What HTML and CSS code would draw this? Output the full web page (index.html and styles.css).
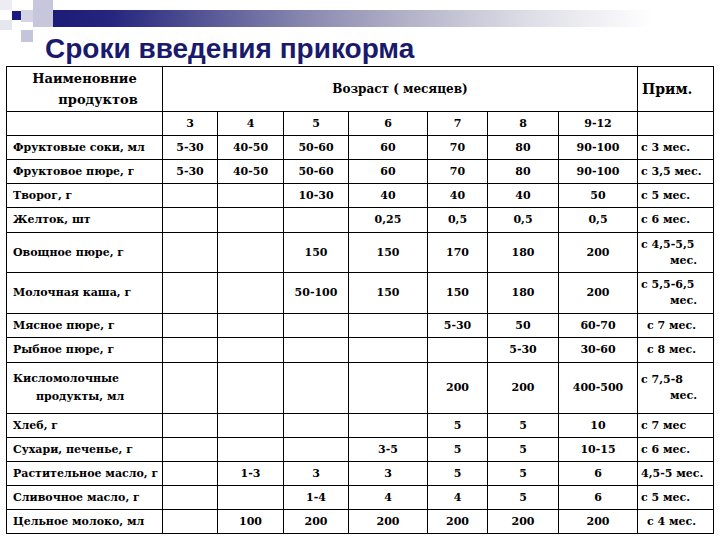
FILE: index.html
```html
<!DOCTYPE html>
<html lang="ru">
<head>
<meta charset="utf-8">
<title>Сроки введения прикорма</title>
<link rel="stylesheet" href="styles.css">
</head>
<body>
<div class="slide">
  <div class="deco">
    <span class="sq sq-a"></span>
    <span class="sq sq-b"></span>
    <span class="sq sq-c"></span>
    <span class="sq sq-d"></span>
    <span class="sq sq-e"></span>
    <span class="sq sq-navy"></span>
    <div class="bar"></div>
  </div>
  <h1 class="title">Сроки введения прикорма</h1>
  <table class="grid">
    <colgroup>
      <col class="c-name"><col class="c3"><col class="c4"><col class="c5"><col class="c6"><col class="c7"><col class="c8"><col class="c9"><col class="c-note">
    </colgroup>
    <tr class="h1">
      <td class="hname"><span class="hl1">Наименовние</span><span class="hl2">продуктов</span></td>
      <td class="hage" colspan="7">Возраст ( месяцев)</td>
      <td class="hnote">Прим.</td>
    </tr>
    <tr class="r24">
      <td></td><td class="v">3</td><td class="v">4</td><td class="v">5</td><td class="v">6</td><td class="v">7</td><td class="v">8</td><td class="v">9-12</td><td></td>
    </tr>
    <tr class="r24">
      <td class="n">Фруктовые соки, мл</td><td class="v">5-30</td><td class="v">40-50</td><td class="v">50-60</td><td class="v">60</td><td class="v">70</td><td class="v">80</td><td class="v">90-100</td><td class="p">с 3 мес.</td>
    </tr>
    <tr class="r24">
      <td class="n">Фруктовое пюре, г</td><td class="v">5-30</td><td class="v">40-50</td><td class="v">50-60</td><td class="v">60</td><td class="v">70</td><td class="v">80</td><td class="v">90-100</td><td class="p">с 3,5 мес.</td>
    </tr>
    <tr class="r24">
      <td class="n">Творог, г</td><td></td><td></td><td class="v">10-30</td><td class="v">40</td><td class="v">40</td><td class="v">40</td><td class="v">50</td><td class="p">с 5 мес.</td>
    </tr>
    <tr class="r25">
      <td class="n">Желток, шт</td><td></td><td></td><td></td><td class="v">0,25</td><td class="v">0,5</td><td class="v">0,5</td><td class="v">0,5</td><td class="p">с 6 мес.</td>
    </tr>
    <tr class="r40">
      <td class="n">Овощное пюре, г</td><td></td><td></td><td class="v">150</td><td class="v">150</td><td class="v">170</td><td class="v">180</td><td class="v">200</td><td class="p"><span class="pl1">с 4,5-5,5</span><span class="pl2">мес.</span></td>
    </tr>
    <tr class="r41">
      <td class="n">Молочная каша, г</td><td></td><td></td><td class="v">50-100</td><td class="v">150</td><td class="v">150</td><td class="v">180</td><td class="v">200</td><td class="p"><span class="pl1">с 5,5-6,5</span><span class="pl2">мес.</span></td>
    </tr>
    <tr class="r24">
      <td class="n">Мясное пюре, г</td><td></td><td></td><td></td><td></td><td class="v">5-30</td><td class="v">50</td><td class="v">60-70</td><td class="p ind">с 7 мес.</td>
    </tr>
    <tr class="r25">
      <td class="n">Рыбное пюре, г</td><td></td><td></td><td></td><td></td><td></td><td class="v">5-30</td><td class="v">30-60</td><td class="p ind">с 8 мес.</td>
    </tr>
    <tr class="r51">
      <td class="n"><span class="nl1">Кисломолочные</span><span class="nl2">продукты, мл</span></td><td></td><td></td><td></td><td></td><td class="v">200</td><td class="v">200</td><td class="v">400-500</td><td class="p"><span class="pl1">с 7,5-8</span><span class="pl2">мес.</span></td>
    </tr>
    <tr class="r24">
      <td class="n">Хлеб, г</td><td></td><td></td><td></td><td></td><td class="v">5</td><td class="v">5</td><td class="v">10</td><td class="p">с 7 мес</td>
    </tr>
    <tr class="r24">
      <td class="n">Сухари, печенье, г</td><td></td><td></td><td></td><td class="v">3-5</td><td class="v">5</td><td class="v">5</td><td class="v">10-15</td><td class="p">с 6 мес.</td>
    </tr>
    <tr class="r24">
      <td class="n">Растительное масло, г</td><td></td><td class="v">1-3</td><td class="v">3</td><td class="v">3</td><td class="v">5</td><td class="v">5</td><td class="v">6</td><td class="p">4,5-5 мес.</td>
    </tr>
    <tr class="r24">
      <td class="n">Сливочное масло, г</td><td></td><td></td><td class="v">1-4</td><td class="v">4</td><td class="v">4</td><td class="v">5</td><td class="v">6</td><td class="p">с 5 мес.</td>
    </tr>
    <tr class="r24">
      <td class="n">Цельное молоко, мл</td><td></td><td class="v">100</td><td class="v">200</td><td class="v">200</td><td class="v">200</td><td class="v">200</td><td class="v">200</td><td class="p ind">с 4 мес.</td>
    </tr>
  </table>
</div>
</body>
</html>
```

FILE: styles.css
```css
html, body {
  margin: 0;
  padding: 0;
  background: #fff;
}

.slide {
  width: 720px;
  height: 540px;
  overflow: hidden;
  color: #000;
}

.deco {
  position: relative;
  height: 27px;
}

.bar {
  margin-left: 53px;
  position: relative;
  top: 10px;
  height: 17px;
  background: linear-gradient(to right, #1c1c78 0px, #26267f 60px, #5a5a98 160px, #8c8cb2 260px, #b8b8cc 370px, #dcdce6 470px, #ffffff 600px);
}

.sq {
  position: absolute;
  display: block;
}
.sq-a { left: 0; top: 0; width: 12px; height: 10px; background: #ececf2; }
.sq-b { left: 33px; top: 0; width: 20px; height: 27px; background: #c6c6dc; }
.sq-c { left: 21px; top: 10px; width: 12px; height: 12px; background: #d4d4e4; }
.sq-d { left: 21px; top: 30px; width: 12px; height: 12px; background: #c4c4da; }
.sq-e { left: 0; top: 20px; width: 12px; height: 10px; background: #e6e6ee; }
.sq-navy { left: 12px; top: 11px; width: 9px; height: 9px; background: #1c1c80; }

.title {
  margin: 0 0 0 45px;
  padding: 7px 0 2px;
  font-family: "Liberation Sans", Arial, sans-serif;
  font-weight: bold;
  font-size: 28px;
  line-height: 30px;
  color: #1a1a6c;
}

.grid {
  margin-left: 6px;
  width: 707px;
  table-layout: fixed;
  border-collapse: collapse;
}

.c-name { width: 156px; }
.c3 { width: 55px; }
.c4 { width: 66px; }
.c5 { width: 65px; }
.c6 { width: 79px; }
.c7 { width: 60px; }
.c8 { width: 71px; }
.c9 { width: 79px; }
.c-note { width: 76px; }

.grid td {
  font-family: "DejaVu Serif", serif;
  font-weight: bold;
  font-size: 11px;
  line-height: 16px;
  color: #000;
  border: 1px solid #000;
  padding: 0;
  vertical-align: middle;
  white-space: nowrap;
  overflow: hidden;
}

.h1 td { height: 44px; }
.r24 td { height: 23px; }
.r25 td { height: 24px; }
.r40 td { height: 39px; }
.r41 td { height: 40px; }
.r51 td { height: 50px; }

.grid td.hname {
  text-align: center;
  font-size: 13px;
  line-height: 21px;
}
.hl1, .hl2 { display: block; }
.hl2 { padding-left: 27px; }

.grid td.hage {
  text-align: center;
  font-size: 12px;
}

.grid td.hnote {
  font-size: 14px;
  padding-left: 4px;
}

.grid td.v { text-align: center; }

.grid td.n {
  padding-left: 6px;
  text-align: left;
}
.nl1, .nl2 { display: block; }
.nl2 { padding-left: 23px; line-height: 19px; }

.grid td.p {
  padding-left: 3px;
  padding-right: 16px;
  text-align: left;
}
.grid td.p.ind { padding-left: 9px; }
.pl1, .pl2 { display: block; }
.pl2 { text-align: right; }
```
